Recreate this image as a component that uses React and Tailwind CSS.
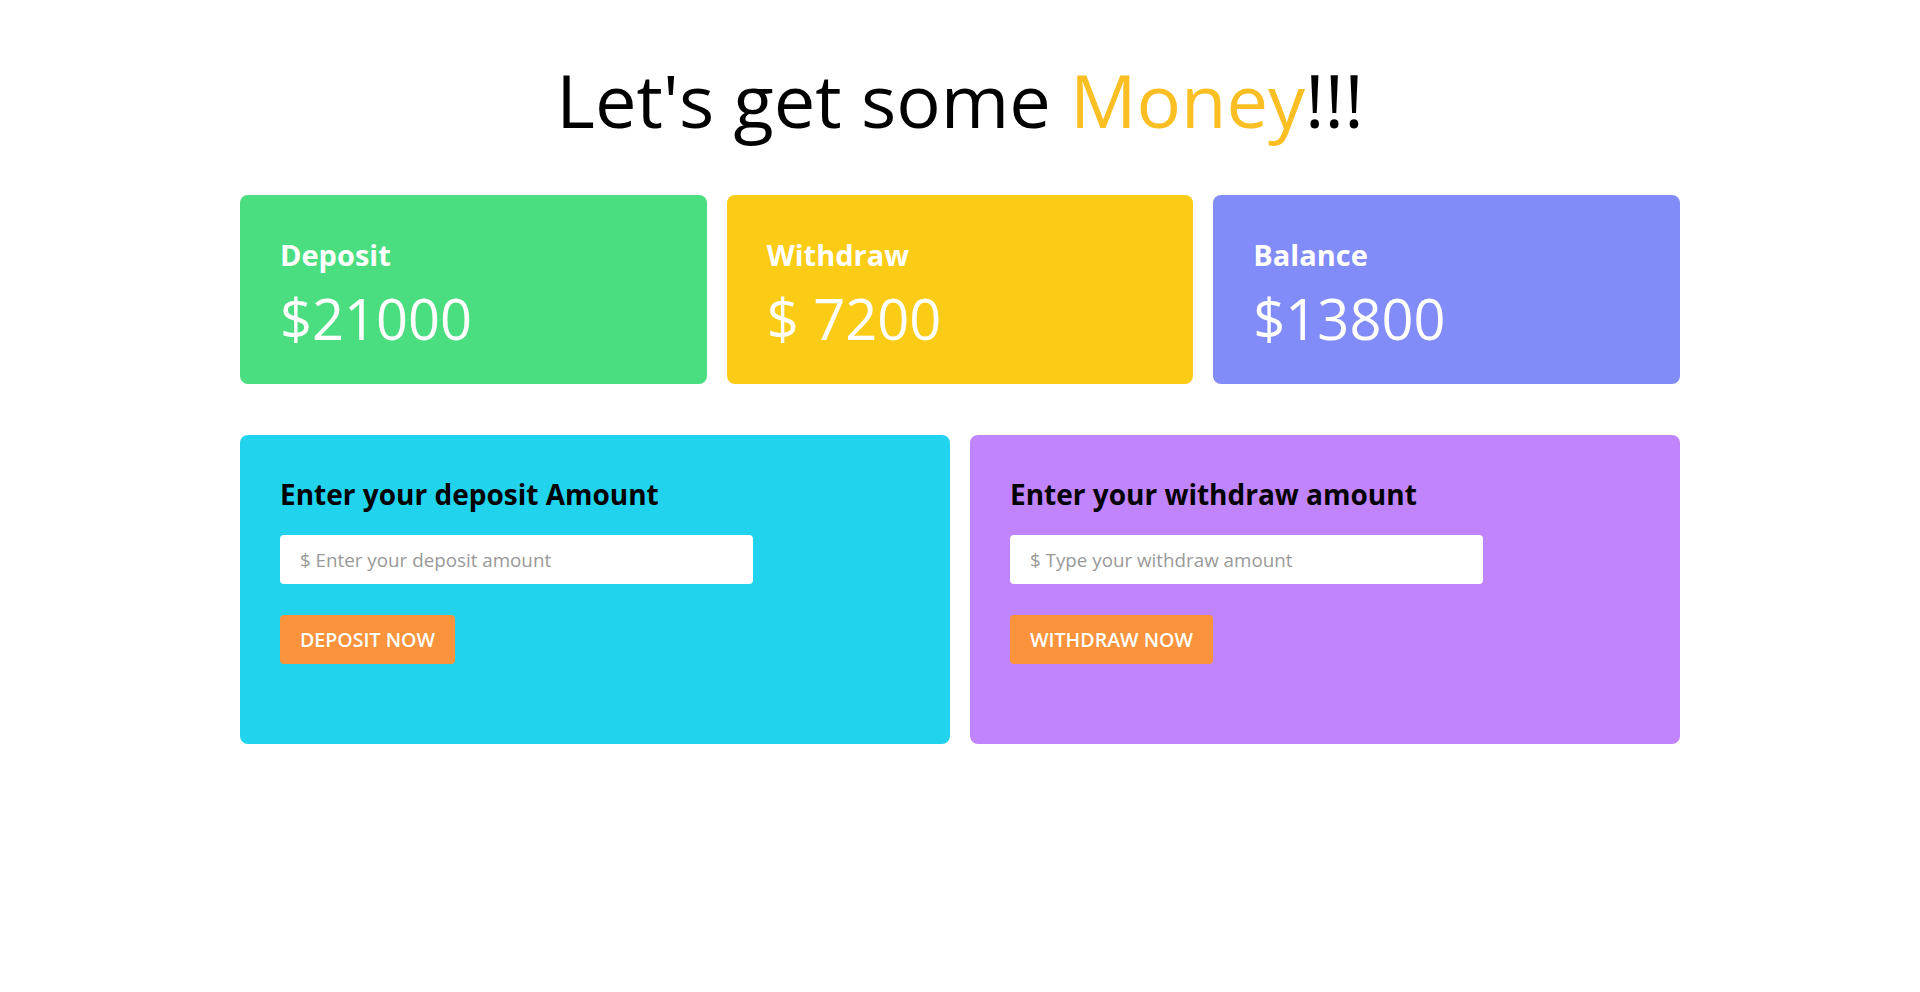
import React, { useState } from 'react';

// Thẻ thống kê phía trên
const StatCard = ({ title, value, color }) => (
    <div className={`${color} rounded-lg px-10 pt-[42px] pb-[30px] text-white`}>
        <p className="text-[29px] font-bold leading-[36px]">{title}</p>
        <p className="text-[56px] font-normal leading-[72px] mt-[9px]">{value}</p>
    </div>
);

// Form nhập tiền
const ActionCard = ({ title, placeholder, button, color, value, onChange, onSubmit }) => (
    <div className={`${color} rounded-lg px-10 pt-[41px] pb-[80px]`}>
        <h3 className="text-[28px] font-bold leading-[36px] text-black">{title}</h3>
        <input
            type="number"
            value={value}
            onChange={onChange}
            placeholder={placeholder}
            className="block mt-[23px] w-3/4 h-[49px] bg-white rounded px-5 text-[18.8px] text-gray-700 placeholder:text-[#999999] outline-none"
        />
        <button
            onClick={onSubmit}
            className="mt-[31px] h-[49px] px-5 bg-[#fb923c] rounded text-white text-[19.6px] font-semibold uppercase"
        >
            {button}
        </button>
    </div>
);

const App = () => {
    const [deposit, setDeposit] = useState(21000);
    const [withdraw, setWithdraw] = useState(7200);
    const [depositInput, setDepositInput] = useState('');
    const [withdrawInput, setWithdrawInput] = useState('');

    const handleDeposit = () => {
        const n = Number(depositInput);
        if (n > 0) setDeposit(d => d + n);
        setDepositInput('');
    };

    const handleWithdraw = () => {
        const n = Number(withdrawInput);
        if (n > 0) setWithdraw(w => w + n);
        setWithdrawInput('');
    };

    return (
        <div className="min-h-screen bg-white font-['Open_Sans',sans-serif]">
            <div className="max-w-[1440px] mx-auto pt-[52px]">
                <h1 className="text-center text-[74px] leading-[96px] font-normal text-black">
                    Let's get some <span className="text-[#fbbf24]">Money</span>!!!
                </h1>

                <div className="grid grid-cols-3 gap-5 mt-[47px]">
                    <StatCard title="Deposit" value={`$${deposit}`} color="bg-[#4ade80]" />
                    <StatCard title="Withdraw" value={`$ ${withdraw}`} color="bg-[#facc15]" />
                    <StatCard title="Balance" value={`$${deposit - withdraw}`} color="bg-[#818cf8]" />
                </div>

                <div className="grid grid-cols-2 gap-5 mt-[51px]">
                    <ActionCard
                        title="Enter your deposit Amount"
                        placeholder="$ Enter your deposit amount"
                        button="Deposit Now"
                        color="bg-[#22d3ee]"
                        value={depositInput}
                        onChange={e => setDepositInput(e.target.value)}
                        onSubmit={handleDeposit}
                    />
                    <ActionCard
                        title="Enter your withdraw amount"
                        placeholder="$ Type your withdraw amount"
                        button="Withdraw Now"
                        color="bg-[#c084fc]"
                        value={withdrawInput}
                        onChange={e => setWithdrawInput(e.target.value)}
                        onSubmit={handleWithdraw}
                    />
                </div>
            </div>
        </div>
    );
};

export default App;
